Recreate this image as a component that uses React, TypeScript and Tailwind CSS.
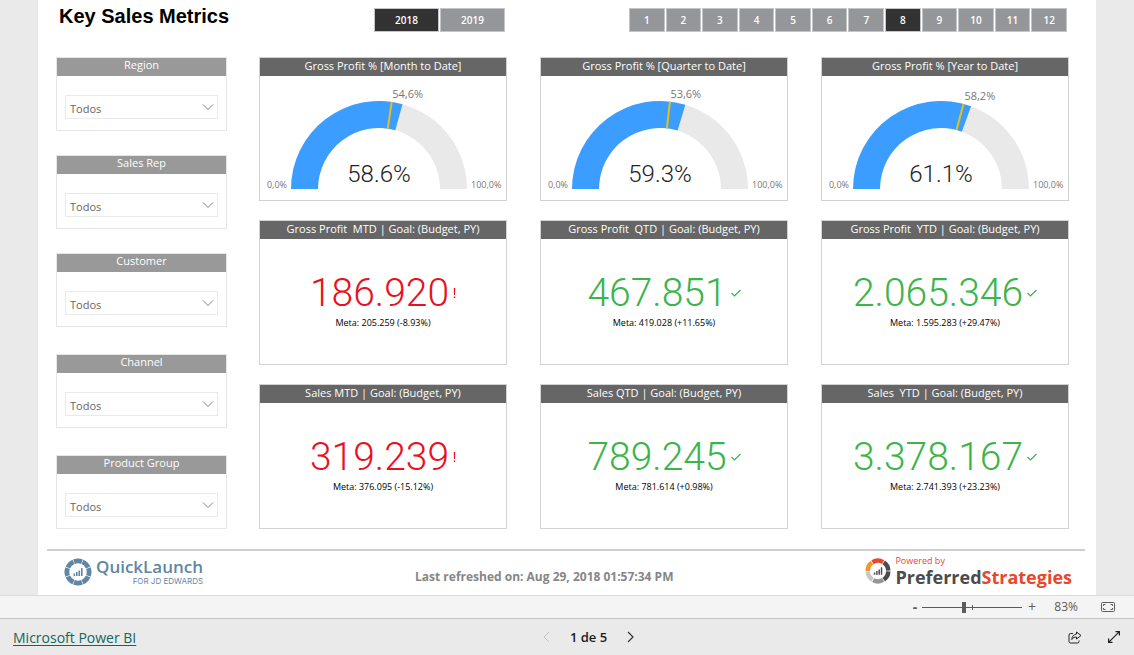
import { useState } from "react";
import { clsx } from "clsx";

const FILTERS_TOP = ["Region", "Sales Rep", "Customer"];
const FILTERS_BOTTOM = ["Channel", "Product Group"];
const YEARS = [2018, 2019];
const MONTHS = [1, 2, 3, 4, 5, 6, 7, 8, 9, 10, 11, 12];

const GAUGES = [
    { title: "Gross Profit % [Month to Date]", value: 58.6, target: 54.6 },
    { title: "Gross Profit % [Quarter to Date]", value: 59.3, target: 53.6 },
    { title: "Gross Profit % [Year to Date]", value: 61.1, target: 58.2 },
];

const KPIS = [
    { title: "Gross Profit  MTD | Goal: (Budget, PY)", value: "186.920", meta: "Meta: 205.259 (-8.93%)", ok: false },
    { title: "Gross Profit  QTD | Goal: (Budget, PY)", value: "467.851", meta: "Meta: 419.028 (+11.65%)", ok: true },
    { title: "Gross Profit  YTD | Goal: (Budget, PY)", value: "2.065.346", meta: "Meta: 1.595.283 (+29.47%)", ok: true },
    { title: "Sales MTD | Goal: (Budget, PY)", value: "319.239", meta: "Meta: 376.095 (-15.12%)", ok: false },
    { title: "Sales QTD | Goal: (Budget, PY)", value: "789.245", meta: "Meta: 781.614 (+0.98%)", ok: true },
    { title: "Sales  YTD | Goal: (Budget, PY)", value: "3.378.167", meta: "Meta: 2.741.393 (+23.23%)", ok: true },
];

export default function App() {
    return (
        <div className="flex min-h-screen flex-col bg-[#eaeaea] font-['Open_Sans','Noto_Sans',sans-serif]">
            <main className="mx-[38px] flex flex-1 flex-col bg-white">
                <ReportHeader />

                <div className="flex gap-8 pr-[27px] pl-[18px] pt-[25px]">
                    <aside className="flex w-[171px] shrink-0 flex-col gap-[27px]">
                        <div className="flex flex-col gap-6">
                            {FILTERS_TOP.map((name) => <FilterCard key={name} name={name} />)}
                        </div>
                        <div className="flex flex-col gap-[27px]">
                            {FILTERS_BOTTOM.map((name) => <FilterCard key={name} name={name} />)}
                        </div>
                    </aside>

                    <section className="grid flex-1 grid-cols-3 gap-x-[33px] gap-y-[19px]">
                        {GAUGES.map((g) => <GaugeCard key={g.title} {...g} />)}
                        {KPIS.map((k) => <KpiCard key={k.title} {...k} />)}
                    </section>
                </div>

                <ReportFooter />
            </main>
            <ZoomBar />
            <StatusBar />
        </div>
    );
}

function ReportHeader() {
    const [year, setYear] = useState(2018);
    const [month, setMonth] = useState(8);

    return (
        <header className="flex h-8 items-end pr-[29px] pl-[21px]">
            <h1 className="w-[315px] self-center font-['Liberation_Sans',Arial,sans-serif] text-xl leading-8 font-bold text-black">
                Key Sales Metrics
            </h1>
            <div className="flex w-[131px] gap-px">
                {YEARS.map((y) => (
                    <SlicerButton key={y} label={y} active={y === year} onClick={() => setYear(y)} />
                ))}
            </div>
            <div className="ml-auto flex w-[438px] gap-px">
                {MONTHS.map((m) => (
                    <SlicerButton key={m} label={m} active={m === month} onClick={() => setMonth(m)} />
                ))}
            </div>
        </header>
    );
}

function SlicerButton({ label, active, onClick }: { label: number; active: boolean; onClick: () => void }) {
    return (
        <button
            type="button"
            aria-pressed={active}
            onClick={onClick}
            className={clsx(
                "h-6 flex-1 border border-[#c4c5c7] text-[10px] leading-5 font-semibold text-white",
                active ? "bg-[#323232]" : "bg-[#95969a]"
            )}
        >
            {label}
        </button>
    );
}

function FilterCard({ name }: { name: string }) {
    const id = name.toLowerCase().replace(" ", "-");

    return (
        <div className="h-[74px] border border-[#e6e6e6]">
            <label htmlFor={id} className="block h-[18px] bg-[#999999] text-center text-[11px] leading-[14px] text-white">
                {name}
            </label>
            <div className="relative mx-2 mt-[19px]">
                <select
                    id={id}
                    className="block h-6 w-full appearance-none border border-[#eaeaea] bg-white pt-[3px] pl-1 text-[11px] leading-5 text-[#666666]"
                >
                    <option>Todos</option>
                </select>
                <svg
                    className="pointer-events-none absolute top-2 right-1 h-2 w-3"
                    viewBox="0 0 12 8"
                    fill="none"
                    stroke="#808080"
                >
                    <path d="M1 1.5 6 6.5 11 1.5" />
                </svg>
            </div>
        </div>
    );
}

function CardTitle({ children }: { children: string }) {
    return (
        <h2 className="h-[18px] bg-[#666666] text-center text-[11px] leading-[15px] whitespace-pre text-white">
            {children}
        </h2>
    );
}

// gauge geometry
const CX = 119;
const CY = 113;
const OUTER = 88;
const INNER = 61;

function polar(pct: number, r: number) {
    const a = Math.PI * (1 - pct / 100);
    return { x: CX + r * Math.cos(a), y: CY - r * Math.sin(a) };
}

function arc(from: number, to: number) {
    const a = polar(from, OUTER);
    const b = polar(to, OUTER);
    const c = polar(to, INNER);
    const d = polar(from, INNER);
    return `M${a.x} ${a.y}A${OUTER} ${OUTER} 0 0 1 ${b.x} ${b.y}L${c.x} ${c.y}A${INNER} ${INNER} 0 0 0 ${d.x} ${d.y}Z`;
}

function GaugeCard({ title, value, target }: { title: string; value: number; target: number }) {
    const t1 = polar(target, INNER);
    const t2 = polar(target, OUTER);
    const label = polar(target, 92);

    return (
        <article className="h-36 border border-[#d0d0d0]">
            <CardTitle>{title}</CardTitle>
            <svg viewBox="0 0 246 124" className="mx-auto block h-[124px] w-[246px]">
                <path d={arc(0, 100)} fill="#e9e9e9" />
                <path d={arc(0, value)} fill="#3b9dff" />
                <line x1={t1.x} y1={t1.y} x2={t2.x} y2={t2.y} stroke="#e3c11c" strokeWidth="2" />
                <text x={label.x} y={label.y} fontSize="11" fill="#777777">
                    {target.toFixed(1).replace(".", ",")}%
                </text>
                <text x="27" y="112" fontSize="9" fill="#777777" textAnchor="end">0,0%</text>
                <text x="211" y="112" fontSize="9" fill="#777777">100,0%</text>
                <text
                    x={CX}
                    y="106"
                    fontSize="24"
                    textAnchor="middle"
                    className="fill-[#222222] font-['Roboto',sans-serif] font-light"
                >
                    {value.toFixed(1)}%
                </text>
            </svg>
        </article>
    );
}

function KpiCard({ title, value, meta, ok }: { title: string; value: string; meta: string; ok: boolean }) {
    return (
        <article className="h-[145px] border border-[#d3d3d3]">
            <CardTitle>{title}</CardTitle>
            <div
                className={clsx(
                    "flex items-center justify-center gap-1 pt-[30px] font-['Roboto',sans-serif] text-[39px] leading-12 font-light",
                    ok ? "text-[#3bb44a]" : "text-[#e81123]"
                )}
            >
                {value}
                {ok ? (
                    <svg viewBox="0 0 10 8" className="h-2 w-[10px]" fill="none" stroke="currentColor" strokeWidth="1.2">
                        <path d="M.5 4 3.5 7 9.5 1" />
                    </svg>
                ) : (
                    <svg viewBox="0 0 3 10" className="h-[10px] w-[3px]" fill="currentColor">
                        <path d="M.8 0h1.4l-.2 7H1zM.8 8.4h1.4V10H.8z" />
                    </svg>
                )}
            </div>
            <p className="text-center text-[9px] leading-3 text-black">{meta}</p>
        </article>
    );
}

function Bars({ color }: { color: string }) {
    return <path fill={color} d="M9.5 15.500h1.600V18H9.500zM12 14h1.600v4H12zM14.500 12.500h1.600V18h-1.600zM17 10h1.600v8H17z" />;
}

// one piece of the logo ring, angles in degrees clockwise from the top
function ringPiece(from: number, to: number) {
    const point = (deg: number, r: number) => {
        const a = (deg * Math.PI) / 180;
        return `${14 + r * Math.sin(a)} ${14 - r * Math.cos(a)}`;
    };
    return `M${point(from, 13.5)}A13.5 13.5 0 0 1 ${point(to, 13.5)}L${point(to, 8.7)}A8.7 8.7 0 0 0 ${point(from, 8.7)}Z`;
}

function ReportFooter() {
    return (
        <footer className="mt-5 mr-[11px] ml-[9px] flex h-[46px] items-center justify-between border-t-2 border-[#d0d0d0] pr-[13px] pl-[17px]">
            <div className="flex items-center gap-1 pb-0.5 text-[#5f87a3]">
                <svg viewBox="0 0 28 28" className="h-7 w-7">
                    {[0, 1, 2, 3, 4, 5, 6, 7].map((i) => (
                        <path key={i} d={ringPiece(i * 45 - 21, i * 45 + 21)} fill="#5f87a3" />
                    ))}
                    <Bars color="#5f87a3" />
                </svg>
                <div className="flex flex-col items-end">
                    <span className="text-[17px] leading-[18px] font-semibold">QuickLaunch</span>
                    <span className="font-['Inter',sans-serif] text-[8px] leading-[10px]">FOR JD EDWARDS</span>
                </div>
            </div>

            <p className="pt-2 pl-5 text-xs font-bold text-[#868686]">Last refreshed on: Aug 29, 2018 01:57:34 PM</p>

            <div className="flex items-center gap-1 pb-1">
                <svg viewBox="0 0 28 28" className="h-[26px] w-[26px]">
                    <path d={ringPiece(-32, 30)} fill="#e8472b" />
                    <path d={ringPiece(34, 88)} fill="#4b4b4d" />
                    <path d={ringPiece(92, 146)} fill="#4b4b4d" />
                    <path d={ringPiece(150, 208)} fill="#939598" />
                    <path d={ringPiece(212, 266)} fill="#c7c8ca" />
                    <path d={ringPiece(270, 324)} fill="#f7941e" />
                    <Bars color="#4b4b4d" />
                </svg>
                <div className="flex flex-col">
                    <span className="text-[9px] leading-3 text-[#e8472b]">Powered by</span>
                    <span className="text-[18px] leading-5 font-bold text-[#4b4b4d]">
                        Preferred<span className="text-[#e8472b]">Strategies</span>
                    </span>
                </div>
            </div>
        </footer>
    );
}

function ZoomBar() {
    const [zoom, setZoom] = useState(83);

    return (
        <div className="flex h-6 items-center justify-end border-y border-t-[#dcdcdc] border-b-[#c6c6c6] bg-[#f4f4f4] pr-[19px] text-[#5c5c5c]">
            <button type="button" aria-label="Zoom out" className="w-[14px] text-sm leading-5 font-bold" onClick={() => setZoom((z) => z - 1)}>
                -
            </button>
            <div className="relative flex w-[100px] items-center">
                <input
                    type="range"
                    aria-label="Zoom"
                    min={50}
                    max={130}
                    value={zoom}
                    onChange={(e) => setZoom(Number(e.target.value))}
                    className="h-3 w-full appearance-none bg-transparent [&::-webkit-slider-runnable-track]:h-px [&::-webkit-slider-runnable-track]:bg-[#5c5c5c] [&::-webkit-slider-thumb]:-mt-[5px] [&::-webkit-slider-thumb]:h-[11px] [&::-webkit-slider-thumb]:w-1 [&::-webkit-slider-thumb]:appearance-none [&::-webkit-slider-thumb]:bg-[#5c5c5c]"
                />
                <span className="pointer-events-none absolute left-1/2 h-[5px] w-px bg-[#5c5c5c]" />
            </div>
            <button type="button" aria-label="Zoom in" className="w-5 text-sm leading-5" onClick={() => setZoom((z) => z + 1)}>
                +
            </button>
            <span className="w-9 text-right text-xs">{zoom}%</span>
            <button type="button" aria-label="Fit to page" className="ml-[23px]">
                <svg viewBox="0 0 14 10" className="h-[10px] w-[14px]" fill="none" stroke="currentColor">
                    <rect x=".5" y=".5" width="13" height="9" rx="1" />
                    <path d="M4.5 2.5h-2v1.5M2.5 6v1.5h2M9.5 2.5h2v1.5M11.5 6v1.5h-2" />
                </svg>
            </button>
        </div>
    );
}

function StatusBar() {
    return (
        <div className="grid h-9 grid-cols-[1fr_auto_1fr] items-center pr-[14px] pl-[13px]">
            <a href="#" className="justify-self-start pt-0.5 text-sm leading-5 text-[#12675c] underline underline-offset-2">
                Microsoft Power BI
            </a>
            <div className="flex items-center gap-5 pl-11">
                <button type="button" aria-label="Previous page" disabled className="text-[#c2c2c2]">
                    <svg viewBox="0 0 7 12" className="h-3 w-[7px]" fill="none" stroke="currentColor">
                        <path d="M6 1 1 6l5 5" />
                    </svg>
                </button>
                <span className="text-[13px] leading-5 font-semibold text-[#1a1a1a]">1 de 5</span>
                <button type="button" aria-label="Next page" className="text-[#333333]">
                    <svg viewBox="0 0 7 12" className="h-3 w-[7px]" fill="none" stroke="currentColor" strokeWidth="1.2">
                        <path d="m1 1 5 5-5 5" />
                    </svg>
                </button>
            </div>
            <div className="flex items-center gap-[26px] justify-self-end text-[#222222]">
                <button type="button" aria-label="Share">
                    <svg viewBox="0 0 14 13" className="h-[13px] w-[14px]" fill="none" stroke="currentColor" strokeLinejoin="round">
                        <path d="M5 2.5H2.5A1.5 1.5 0 0 0 1 4v6.500A1.500 1.500 0 0 0 2.500 12h7a1.500 1.500 0 0 0 1.500-1.500V9.500" />
                        <path d="M8.500 1 13 4.500 8.500 8V6C6.500 6 5 6.700 3.800 8.500 4 5.500 5.500 3.500 8.500 3z" />
                    </svg>
                </button>
                <button type="button" aria-label="Full screen">
                    <svg viewBox="0 0 12 12" className="h-3 w-3" fill="none" stroke="currentColor" strokeWidth="1.2">
                        <path d="M7.500.6h3.900v3.900M4.500 11.400H.6V7.500M11.400.6.6 11.400" />
                    </svg>
                </button>
            </div>
        </div>
    );
}
